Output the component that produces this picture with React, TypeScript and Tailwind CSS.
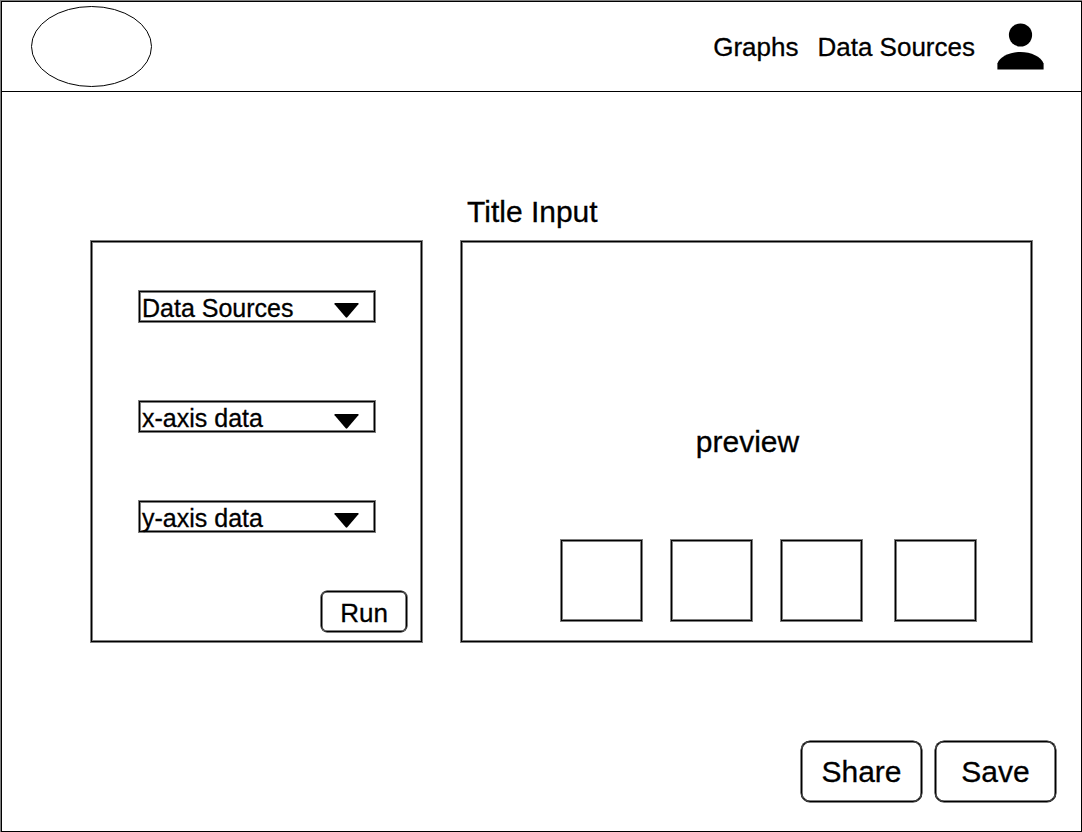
import React from "react";

const fields = [
  { label: "Data Sources", box: "mt-[49px]", arrow: "mt-[11px]" },
  { label: "x-axis data", box: "mt-[79px]", arrow: "mt-[12px]" },
  { label: "y-axis data", box: "mt-[69px]", arrow: "mt-[11px]" },
];

const thumbs = ["ml-[99px]", "ml-[29px]", "ml-[29px]", "ml-[33px]"];

function Header() {
  return (
    <header className="flex h-[90px] shrink-0 items-start border-b border-black">
      <svg className="ml-[28px] mt-[3px] h-[83px] w-[123px]" viewBox="0 0 123 83">
        <ellipse cx="61.5" cy="41.5" rx="60" ry="40" fill="none" stroke="#000" />
      </svg>
      <nav className="ml-auto mt-[30px] flex gap-[19px] text-[26px] leading-[30px]">
        <a>Graphs</a>
        <a>Data Sources</a>
      </nav>
      <svg className="ml-[22px] mr-[37px] mt-[21px] h-[48px] w-[47px]" viewBox="0 0 47 48">
        <circle cx="23.5" cy="12" r="11.6" />
        <path d="M0.4 46.5V40.5C3 33.5 13 29 23.500 29S44 33.500 46.600 40.500V46.500Z" />
      </svg>
    </header>
  );
}

function SelectBox({ label, box, arrow }: { label: string; box: string; arrow: string }) {
  return (
    <div
      className={`${box} ml-[47px] flex h-[31px] w-[236px] items-start justify-between border border-black pl-[2px] pr-[15px] shadow-[0_0_0_1px_#7f7f7f,inset_0_0_0_1px_#7f7f7f]`}
    >
      <span className="mt-[2px] whitespace-nowrap text-[25px] leading-[29px]">{label}</span>
      <svg className={`${arrow} h-[15px] w-[25px] shrink-0`} viewBox="0 0 25 15">
        <path d="M1 0H24Q25 0.300 24.400 1.200L13.300 14.300Q12.500 15.200 11.700 14.300L0.600 1.200Q0 0.300 1 0Z" />
      </svg>
    </div>
  );
}

export default function App() {
  return (
    <div className="h-[832px] w-[1082px] overflow-hidden bg-[#7f7f7f] pl-px pt-px font-['Liberation_Sans',Arial,sans-serif] text-black [-webkit-text-stroke:0.3px_#000]">
      <div className="flex h-[831px] w-[1081px] flex-col border border-black bg-white">
        <Header />
        <h1 className="ml-[465px] mt-[102px] h-[47px] text-[30px] leading-[36px]">Title Input</h1>
        <main className="ml-[89px] flex gap-[39px]">
          <section className="flex h-[401px] w-[331px] flex-col border border-black shadow-[0_0_0_1px_#7f7f7f,inset_0_0_0_1px_#7f7f7f]">
            {fields.map((f) => (
              <SelectBox key={f.label} {...f} />
            ))}
            <button className="ml-auto mr-[14px] mt-[59px] h-[41px] w-[86px] rounded-[6px] border border-black pt-[3px] text-[26px] leading-[36px] shadow-[0_0_0_0.5px_#000,inset_0_0_0_0.5px_#000]">
              Run
            </button>
          </section>
          <section className="flex h-[401px] w-[571px] flex-col border border-black shadow-[0_0_0_1px_#7f7f7f,inset_0_0_0_1px_#7f7f7f]">
            <p className="mt-[182px] pl-[2px] text-center text-[30px] leading-[36px]">preview</p>
            <div className="mt-[80px] flex">
              {thumbs.map((t, i) => (
                <div
                  key={i}
                  className={`${t} size-[81px] border border-black shadow-[0_0_0_1px_#7f7f7f,inset_0_0_0_1px_#7f7f7f]`}
                />
              ))}
            </div>
          </section>
        </main>
        <footer className="mr-[25px] mt-[99px] flex justify-end gap-[13px]">
          {["Share", "Save"].map((t) => (
            <button
              key={t}
              className="h-[61px] w-[121px] rounded-[9px] border border-black text-[30px] leading-[59px] shadow-[0_0_0_0.5px_#000,inset_0_0_0_0.5px_#000]"
            >
              {t}
            </button>
          ))}
        </footer>
      </div>
    </div>
  );
}
